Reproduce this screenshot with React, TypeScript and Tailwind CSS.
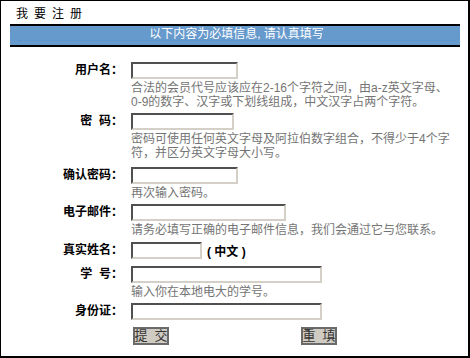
import React from 'react'

type Field = {
  label: string
  width: string
  pb: string
  help?: React.ReactNode
  extra?: string
}

const INPUT =
  'h-[17px] border-2 border-t-[#505050] border-l-[#505050] border-b-[#d4d0c8] border-r-[#d4d0c8] bg-white'

const fields: Field[] = [
  {
    label: '用户名：',
    width: 'w-[107px]',
    pb: 'pb-[4px]',
    help: (
      <>
        合法的会员代号应该应在2-16个字符之间，由a-z英文字母、
        <br />
        0-9的数字、汉字或下划线组成，中文汉字占两个字符。
      </>
    ),
  },
  {
    label: '密  码：',
    width: 'w-[103px]',
    pb: 'pb-[7px]',
    help: (
      <>
        密码可使用任何英文字母及阿拉伯数字组合，不得少于4个字
        <br />
        符，并区分英文字母大小写。
      </>
    ),
  },
  { label: '确认密码：', width: 'w-[107px]', pb: 'pb-[4px]', help: '再次输入密码。' },
  {
    label: '电子邮件：',
    width: 'w-[155px]',
    pb: 'pb-[5px]',
    help: '请务必填写正确的电子邮件信息，我们会通过它与您联系。',
  },
  { label: '真实姓名：', width: 'w-[71px]', pb: 'pb-[7px]', extra: '(\u00a0中文\u00a0)' },
  { label: '学  号：', width: 'w-[191px]', pb: 'pb-[4px]', help: '输入你在本地电大的学号。' },
  { label: '身份证：', width: 'w-[191px]', pb: 'pb-[7px]' },
]

function FormRow({ field }: { field: Field }) {
  return (
    <div className={`flex ${field.pb}`}>
      <div className="w-[122px] shrink-0 whitespace-pre text-right text-[12px] leading-[17px] font-bold text-black">
        {field.label}
      </div>
      <div className="ml-[8px] flex flex-col">
        <div className="flex items-end">
          <div className={`${INPUT} ${field.width}`} />
          {field.extra && (
            <span className="ml-[5px] text-[12px] leading-[14px] font-bold text-black">
              {field.extra}
            </span>
          )}
        </div>
        {field.help && (
          <div className="mt-[2px] whitespace-nowrap text-[12px] leading-[14px] text-[#747474]">
            {field.help}
          </div>
        )}
      </div>
    </div>
  )
}

function GrayButton({ children }: { children: React.ReactNode }) {
  return (
    <div className="h-[18px] w-[36px] flex items-center justify-center whitespace-pre border-2 border-[#6a6a6a] bg-[#cfcac2] text-[13px] leading-[14px] text-[#333]">
      {children}
    </div>
  )
}

export default function App() {
  return (
    <div className="w-[470px] h-[358px] border-l border-t border-r-2 border-b-2 border-black bg-white font-[Liberation_Sans,Noto_Sans_CJK_SC,sans-serif]">
      {/* titre */}
      <div className="h-[23px] pl-[15px] pt-[7px] text-[12px] leading-[12px] tracking-[6px] text-black">
        我要注册
      </div>

      {/* bandeau bleu */}
      <div className="ml-[9px] w-[450px] h-[23px] border-y-2 border-black bg-[#6699cc]">
        <div className="ml-[8px] mr-[5px] pt-[2px] border-b border-dotted border-[#4b8fc6] text-center text-[12px] leading-[12px] text-white">
          以下内容为必填信息, 请认真填写
        </div>
      </div>

      {/* formulaire */}
      <div className="pt-[15px] flex flex-col">
        {fields.map((field) => (
          <FormRow key={field.label} field={field} />
        ))}
        <div className="flex">
          <div className="ml-[132px]">
            <GrayButton>提  交</GrayButton>
          </div>
          <div className="ml-[132px]">
            <GrayButton>重  填</GrayButton>
          </div>
        </div>
      </div>
    </div>
  )
}
